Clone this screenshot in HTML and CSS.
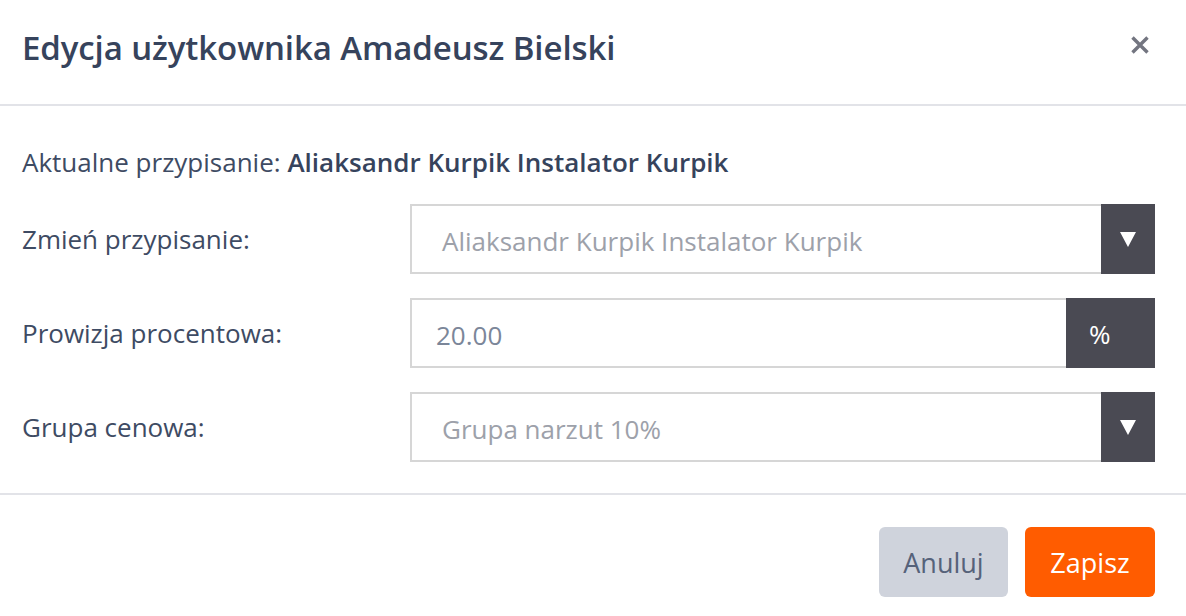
FILE: index.html
```html
<!DOCTYPE html>
<html lang="pl">
<head>
<meta charset="utf-8">
<title>Edycja użytkownika</title>
<link rel="stylesheet" href="styles.css">
</head>
<body>
<div class="modal">
  <header class="modal-header">
    <h1 class="modal-title">Edycja użytkownika Amadeusz Bielski</h1>
    <button class="close" aria-label="Zamknij">
      <svg width="20" height="20" viewBox="0 0 20 20"><path d="M2.5 2.5 L17.5 17.5 M17.5 2.5 L2.5 17.5" stroke="#737580" stroke-width="3.4" stroke-linecap="butt"/></svg>
    </button>
  </header>
  <section class="modal-body">
    <p class="current">Aktualne przypisanie: <strong>Aliaksandr Kurpik Instalator Kurpik</strong></p>
    <div class="row">
      <label class="label">Zmień przypisanie:</label>
      <div class="control select">
        <span class="value">Aliaksandr Kurpik Instalator Kurpik</span>
        <span class="caret"><span class="tri"></span></span>
      </div>
    </div>
    <div class="row">
      <label class="label">Prowizja procentowa:</label>
      <div class="control input">
        <span class="value num">20.00</span>
        <span class="addon">%</span>
      </div>
    </div>
    <div class="row">
      <label class="label">Grupa cenowa:</label>
      <div class="control select">
        <span class="value">Grupa narzut 10%</span>
        <span class="caret"><span class="tri"></span></span>
      </div>
    </div>
  </section>
  <footer class="modal-footer">
    <button class="btn btn-cancel">Anuluj</button>
    <button class="btn btn-save">Zapisz</button>
  </footer>
</div>
</body>
</html>
```
FILE: styles.css
```css
* { box-sizing: border-box; }
html, body { margin: 0; padding: 0; background: #fff; }
body {
  font-family: "Open Sans", "Noto Sans", "Liberation Sans", sans-serif;
  color: #3e4b63;
  width: 1186px;
  height: 616px;
  overflow: hidden;
}
.modal { width: 1186px; }
.modal-header {
  height: 106px;
  border-bottom: 2px solid #e2e3e8;
  display: flex;
  align-items: center;
  justify-content: space-between;
  padding: 0 36px 0 22px;
}
.modal-title {
  margin: 0;
  font-size: 33px;
  font-weight: 600;
  color: #36435c;
  letter-spacing: -0.1px;
  padding-bottom: 10px;
}
.close {
  background: none;
  border: 0;
  padding: 0;
  display: flex;
  margin-bottom: 14px;
}
.modal-body {
  padding: 40px 31px 31px 22px;
  border-bottom: 2px solid #e2e3e8;
}
.current {
  margin: 0 0 26px;
  font-size: 26px;
  line-height: 32px;
}
.current strong { font-weight: 600; color: #36435c; }
.row {
  display: flex;
  align-items: center;
  height: 70px;
  margin-bottom: 24px;
}
.row:last-child { margin-bottom: 0; }
.label {
  width: 388px;
  font-size: 26px;
}
.control {
  flex: 1;
  height: 70px;
  display: flex;
  align-items: stretch;
  border: 2px solid #d6d6d6;
}
.value {
  flex: 1;
  display: flex;
  align-items: center;
  font-size: 26px;
  color: #9da1aa;
  padding-left: 30px;
  padding-top: 3px;
}
.num { color: #7b8699; padding-left: 24px; }
.caret {
  width: 54px;
  margin: -2px -2px -2px 0;
  background: #4a4a53;
  display: flex;
  align-items: center;
  justify-content: center;
}
.tri {
  width: 0;
  height: 0;
  border-left: 8px solid transparent;
  border-right: 8px solid transparent;
  border-top: 15px solid #fff;
}
.addon {
  width: 89px;
  margin: -2px -2px -2px 0;
  background: #4a4a53;
  color: #fff;
  font-size: 26px;
  display: flex;
  align-items: center;
  padding-left: 23px;
  padding-top: 2px;
}
.modal-footer {
  display: flex;
  justify-content: flex-end;
  gap: 17px;
  padding: 32px 31px 0 0;
}
.btn {
  height: 70px;
  width: 130px;
  border: 0;
  border-radius: 6px;
  font-family: inherit;
  font-size: 27px;
  cursor: pointer;
}
.btn-cancel { background: #cfd3dc; color: #56627a; width: 129px; }
.btn-save { background: #ff5c00; color: #fff; }
```
